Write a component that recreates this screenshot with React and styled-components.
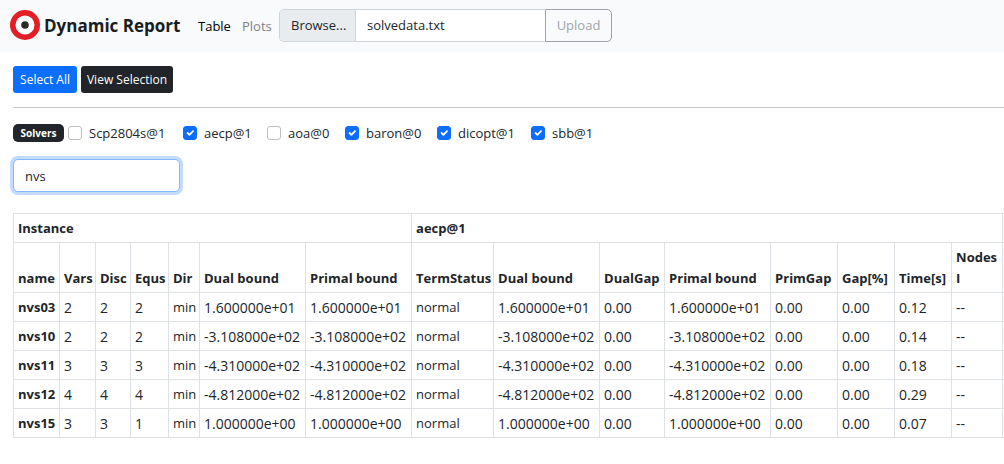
import React, { useState } from "react";
import styled, { createGlobalStyle, css } from "styled-components";

const GlobalStyle = createGlobalStyle`
  *, *::before, *::after { box-sizing: border-box; }
  body {
    margin: 0;
    background: #fff;
    color: #212529;
    font-family: "Segoe UI", "Open Sans", "Noto Sans", sans-serif;
    font-size: 13px;
    line-height: 21px;
  }
  button, input { font: inherit; color: inherit; }
`;

const Navbar = styled.nav`
  display: flex;
  align-items: center;
  height: 52px;
  padding: 0 10px 2px;
  background: #f8fafc;
`;

const Brand = styled.a`
  display: flex;
  align-items: center;
  gap: 4px;
  width: 181px;
  color: #1a1d20;
  font-size: 17px;
  font-weight: 700;
  white-space: nowrap;
  text-decoration: none;
`;

const NavLink = styled.a`
  width: 44px;
  padding: 2px 0 0 7px;
  color: ${(p) => (p.$active ? "#000" : "#808387")};
  text-decoration: none;
`;

const FileGroup = styled.form`
  display: flex;
  height: 33px;
  margin-left: auto;
  width: 333px;
`;

const NavMain = styled.div`
  display: flex;
  align-items: center;
  width: 602px;
`;

const FilePicker = styled.label`
  position: relative;
  display: flex;
  flex: 1;
  overflow: hidden;
  border: 1px solid #ced4da;
  border-right: 0;
  border-radius: 5px 0 0 5px;
  background: #fff;
`;

const HiddenFile = styled.input`
  position: absolute;
  inset: 0;
  opacity: 0;
`;

const Browse = styled.span`
  width: 76px;
  padding: 5px 0 5px 11px;
  border-right: 1px solid #ced4da;
  background: #e9ecef;
`;

const FileName = styled.span`
  padding: 5px 11px;
`;

const Upload = styled.button`
  width: 67px;
  padding: 0;
  border: 1px solid #9da2a8;
  border-radius: 0 5px 5px 0;
  background: transparent;
  color: #a1a6ab;
`;

const Content = styled.main`
  padding: 14px 0 0 13px;
`;

const Toolbar = styled.div`
  display: flex;
  gap: 4px;
`;

const Action = styled.button`
  height: 27px;
  width: ${(p) => (p.$primary ? 64 : 92)}px;
  padding: 0;
  border: 0;
  border-radius: 3px;
  background: ${(p) => (p.$primary ? "#0d6efd" : "#212529")};
  color: #fff;
  font-size: 12px;
  white-space: nowrap;
`;

const Divider = styled.hr`
  height: 1px;
  margin: 14px 0 13px;
  border: 0;
  background: #c7c8c9;
`;

const Solvers = styled.fieldset`
  display: flex;
  align-items: center;
  height: 24px;
  margin: 0;
  padding: 0;
  border: 0;
`;

const Badge = styled.span`
  width: 51px;
  height: 18px;
  margin-right: 4px;
  border-radius: 5px;
  background: #212529;
  color: #fff;
  font-size: 10px;
  font-weight: 700;
  line-height: 18px;
  text-align: center;
`;

const Check = styled.label`
  display: flex;
  align-items: center;
  gap: 7px;
  width: ${(p) => p.$width}px;
  white-space: nowrap;
`;

const CheckBox = styled.span`
  position: relative;
  flex: none;
  width: 14px;
  height: 14px;

  input {
    display: block;
    appearance: none;
    width: 14px;
    height: 14px;
    margin: 0;
    border: 1px solid #bfbfbf;
    border-radius: 3px;
    background: #fff;
  }
  input:checked { border-color: #0d6efd; background: #0d6efd; }
  svg { position: absolute; inset: 1px; pointer-events: none; }
`;

const Search = styled.input`
  display: block;
  width: 167px;
  height: 33px;
  margin: 14px 0 21px;
  padding: 0 11px;
  border: 1px solid #86b7fe;
  border-radius: 5px;
  outline: 0;
  box-shadow: 0 0 0 3px #c2dbfe;
`;

const Grid = styled.table`
  width: 100%;
  table-layout: fixed;
  border-collapse: collapse;
`;

const Col = styled.col`
  width: ${(p) => p.$width}px;
`;

const cell = css`
  height: 29px;
  padding: 4px 3px 3px 4px;
  border: 1px solid #dee2e6;
  text-align: left;
  vertical-align: bottom;
`;

const Head = styled.th`
  ${cell}
  font-weight: 700;
`;

const Cell = styled.td`
  ${cell}
  font-size: ${(p) => (p.$numeric ? 14 : 13)}px;
  white-space: nowrap;
`;

const Rest = styled.td`
  padding: 0;
  border: 1px solid #dee2e6;
  border-right: 0;
`;

const solvers = [
  ["Scp2804s@1", false, 115],
  ["aecp@1", true, 84],
  ["aoa@0", false, 78],
  ["baron@0", true, 92],
  ["dicopt@1", true, 94],
  ["sbb@1", true, 80],
];

const columns = [
  ["name", 46], ["Vars", 36], ["Disc", 35], ["Equs", 38], ["Dir", 31],
  ["Dual bound", 106], ["Primal bound", 106], ["TermStatus", 82],
  ["Dual bound", 106], ["DualGap", 65], ["Primal bound", 106],
  ["PrimGap", 67], ["Gap[%]", 57], ["Time[s]", 57], ["Nodes I", 51],
];

const rows = [
  ["nvs03", 2, 2, 2, "1.600000e+01", "0.12"],
  ["nvs10", 2, 2, 2, "-3.108000e+02", "0.14"],
  ["nvs11", 3, 3, 3, "-4.310000e+02", "0.18"],
  ["nvs12", 4, 4, 4, "-4.812000e+02", "0.29"],
  ["nvs15", 3, 3, 1, "1.000000e+00", "0.07"],
].map(([name, vars, disc, equs, bound, time]) => [
  name, vars, disc, equs, "min", bound, bound, "normal",
  bound, "0.00", bound, "0.00", "0.00", time, "--",
]);

const isNumeric = (value) => !/^[a-z]/.test(String(value));

function Logo() {
  return (
    <svg width="30" height="30" viewBox="0 0 30 30" aria-hidden="true">
      <circle cx="15" cy="15" r="15" fill="#e31e24" />
      <circle cx="15" cy="15" r="9.5" fill="#fff" />
      <circle cx="15" cy="15" r="3.8" fill="#2b2a29" />
    </svg>
  );
}

function SolverCheck({ name, initial, width }) {
  const [checked, setChecked] = useState(initial);
  return (
    <Check $width={width}>
      <CheckBox>
        <input type="checkbox" checked={checked} onChange={() => setChecked(!checked)} />
        {checked && (
          <svg width="12" height="12" viewBox="0 0 20 20" fill="none" stroke="#fff"
            strokeWidth="3" strokeLinecap="round" strokeLinejoin="round">
            <path d="m6 10 3 3 6-6" />
          </svg>
        )}
      </CheckBox>
      {name}
    </Check>
  );
}

export default function App() {
  const [query, setQuery] = useState("nvs");
  const [file, setFile] = useState("solvedata.txt");
  return (
    <>
      <GlobalStyle />
      <Navbar>
        <NavMain>
          <Brand href="#"><Logo />Dynamic Report</Brand>
          <NavLink href="#table" $active>Table</NavLink>
          <NavLink href="#plots">Plots</NavLink>
          <FileGroup>
            <FilePicker>
              <HiddenFile type="file" onChange={(e) => e.target.files[0] && setFile(e.target.files[0].name)} />
              <Browse>Browse...</Browse>
              <FileName>{file}</FileName>
            </FilePicker>
            <Upload type="button" disabled>Upload</Upload>
          </FileGroup>
        </NavMain>
      </Navbar>
      <Content>
        <Toolbar>
          <Action $primary type="button">Select All</Action>
          <Action type="button">View Selection</Action>
        </Toolbar>
        <Divider />
        <Solvers>
          <Badge>Solvers</Badge>
          {solvers.map(([name, on, width]) => (
            <SolverCheck key={name} name={name} initial={on} width={width} />
          ))}
        </Solvers>
        <Search type="text" aria-label="Filter instances" value={query}
          onChange={(e) => setQuery(e.target.value)} />
        <Grid>
          <colgroup>
            {columns.map(([, width], i) => <Col key={i} $width={width} />)}
            <col />
          </colgroup>
          <thead>
            <tr>
              <Head colSpan={7} scope="colgroup">Instance</Head>
              <Head colSpan={8} scope="colgroup">aecp@1</Head>
              <Rest />
            </tr>
            <tr>
              {columns.map(([label], i) => <Head key={i} scope="col">{label}</Head>)}
              <Rest />
            </tr>
          </thead>
          <tbody>
            {rows.map(([name, ...values]) => (
              <tr key={name}>
                <Head scope="row">{name}</Head>
                {values.map((value, i) => <Cell key={i} $numeric={isNumeric(value)}>{value}</Cell>)}
                <Rest />
              </tr>
            ))}
          </tbody>
        </Grid>
      </Content>
    </>
  );
}
